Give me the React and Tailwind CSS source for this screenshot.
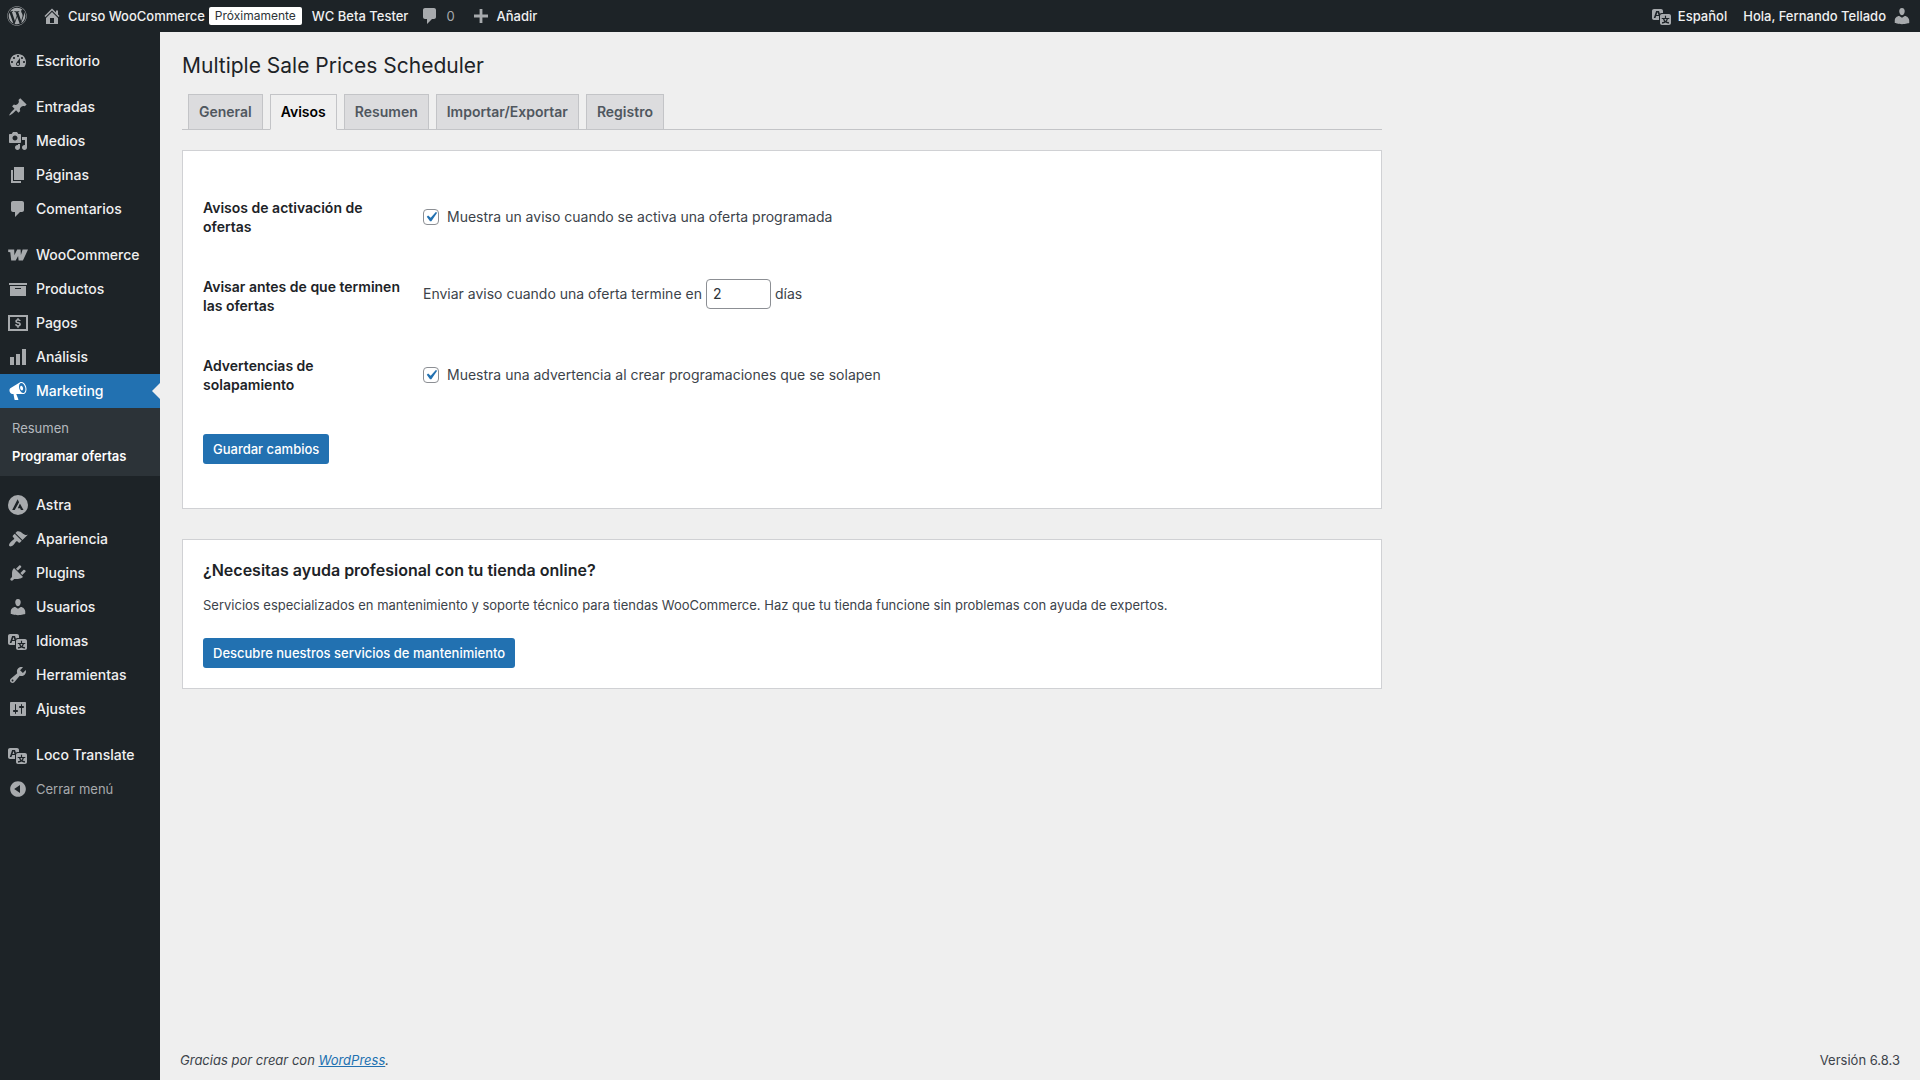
import { FaWordpress } from 'react-icons/fa';

const ICONS = {
  dashboard: 'M3.76 16h12.48c1.1-1.37 1.76-3.11 1.76-5 0-4.42-3.58-8-8-8s-8 3.58-8 8c0 1.89.66 3.63 1.76 5zM10 4c.55 0 1 .45 1 1s-.45 1-1 1-1-.45-1-1 .45-1 1-1zM6 6c.55 0 1 .45 1 1s-.45 1-1 1-1-.45-1-1 .45-1 1-1zm8 0c.55 0 1 .45 1 1s-.45 1-1 1-1-.45-1-1 .45-1 1-1zm-5.37 5.55L12 7v6c0 1.1-.9 2-2 2s-2-.9-2-2c0-.57.24-1.08.63-1.45zM4 10c.55 0 1 .45 1 1s-.45 1-1 1-1-.45-1-1 .45-1 1-1zm12 0c.55 0 1 .45 1 1s-.45 1-1 1-1-.45-1-1 .45-1 1-1zm-5 3c0-.55-.45-1-1-1s-1 .45-1 1 .45 1 1 1 1-.45 1-1z',
  post: 'M10.44 3.02l1.82-1.82 6.36 6.35-1.83 1.82c-1.05-.68-2.48-.57-3.41.36l-.75.75c-.92.93-1.04 2.35-.35 3.41l-1.83 1.82-2.41-2.41-2.8 2.79c-.42.42-3.38 2.71-3.8 2.29s1.86-3.39 2.28-3.81l2.79-2.79L4.1 9.36l1.83-1.82c1.05.69 2.48.57 3.4-.36l.75-.75c.93-.92 1.05-2.35.36-3.41z',
  media: 'M13 11V4c0-.55-.45-1-1-1h-1.67L9 1H5L3.67 3H2c-.55 0-1 .45-1 1v7c0 .55.45 1 1 1h10c.55 0 1-.45 1-1zM7 4.5c1.38 0 2.5 1.12 2.5 2.5S8.38 9.5 7 9.5 4.5 8.38 4.5 7 5.62 4.5 7 4.5zM14 6h5v10.5c0 1.38-1.12 2.5-2.5 2.5S14 17.88 14 16.5s1.12-2.5 2.5-2.5c.17 0 .34.02.5.05V9h-3V6zm-4 8.05V13h2v3.5c0 1.38-1.12 2.5-2.5 2.5S7 17.88 7 16.5 8.12 14 9.5 14c.17 0 .34.02.5.05z',
  page: 'M6 15V2h10v13H6zm-1 1h8v2H3V5h2v11z',
  comments: 'M5 2h9c1.1 0 2 .9 2 2v7c0 1.1-.9 2-2 2h-2l-5 5v-5H5c-1.1 0-2-.9-2-2V4c0-1.1.9-2 2-2z',
  woo: 'M.2 4.6h6l.2 5.6 2.8-5.6h3.4l.3 5.400 1.700-5.400H20l-5.100 11h-4.300l-.5-4.700-2.400 4.700H3.200L2.300 7.300l-2.100-.4z',
  archive: 'M19 4v2H1V4h18zM2 7h16v10H2V7zm11 3V9H7v1h6z',
  payments: 'M0 2h20v16H0V2zm2 2v12h16V4H2zm7.2 1.2h1.6v1c1.1.2 1.9.9 2 1.9h-1.7c-.1-.4-.5-.6-1.1-.6-.7 0-1.1.2-1.1.7 0 .4.3.6 1.3.8 1.8.4 2.7.9 2.7 2.3 0 1.200-.8 2-2.100 2.200v1.300H9.200v-1.300c-1.300-.2-2.100-1-2.200-2.200h1.800c.1.6.5.9 1.300.9.700 0 1.100-.3 1.100-.8s-.3-.7-1.400-.9c-1.700-.4-2.500-1-2.500-2.200 0-1.100.700-1.900 1.900-2.100z',
  chart: 'M18 18V2h-4v16h4zm-6 0V7H8v11h4zm-6 0v-8H2v8h4z',
  megaphone: 'M18.15 5.94c.46 1.62.38 3.22-.02 4.48-.42 1.28-1.26 2.18-2.3 2.48-.16.06-.26.06-.4.06-.06.02-.12.02-.18.02-.06.02-.14.02-.22.02h-6.8l2.22 5.5c.02.14-.06.26-.14.34-.08.1-.24.16-.34.16H6.95c-.1 0-.26-.06-.34-.16-.08-.08-.16-.2-.14-.34l-1-5.5H4.25l-.02-.02c-.5.06-1.08-.18-1.54-.62s-.88-1.08-1.06-1.88c-.24-.8-.2-1.56-.02-2.2.18-.62.58-1.08 1.06-1.3l.02-.02 9-5.4c.1-.06.18-.1.24-.16.06-.04.14-.08.24-.12.16-.08.28-.12.5-.18 1.04-.3 2.24.1 3.22.98s1.84 2.24 2.26 3.86zm-2.58 5.98h-.02c.4-.1.74-.34 1.04-.7.58-.7.86-1.76.86-3.04 0-.64-.1-1.3-.28-1.98-.34-1.36-1.02-2.5-1.78-3.24s-1.68-1.1-2.46-.88c-.82.22-1.4.96-1.7 2-.32 1.04-.28 2.36.06 3.72.38 1.36 1 2.5 1.8 3.24.78.74 1.62 1.1 2.48.88zm-2.54-7.08c.22-.04.42-.02.62.04.38.16.76.48 1.02 1s.42 1.2.42 1.78c0 .3-.04.56-.12.8-.18.48-.44.84-.86.94-.34.1-.8-.06-1.14-.4s-.64-.86-.78-1.5c-.18-.62-.12-1.24.02-1.72s.48-.84.82-.94z',
  astra: 'M10 0a10 10 0 1 0 0 20 10 10 0 0 0 0-20zM9.600 4.200l1.500 3L6.700 15H4.200zM11.900 8.600l3.600 6.400h-2.600l-.8-1.700h-2.300z',
  appearance: 'M14.48 11.06L7.41 3.99l1.5-1.5c.5-.56 2.3-.47 3.51.32 1.21.8 1.43 1.28 2.91 2.1 1.18.64 2.45 1.26 4.45.85zm-.71.71L6.7 4.7 4.93 6.47c-.39.39-.39 1.02 0 1.41l1.06 1.06c.39.39.39 1.03 0 1.42-.6.6-1.43 1.11-2.21 1.69-.35.26-.7.53-1.01.84C1.43 14.23.4 16.08 1.4 17.07c.99 1 2.84-.03 4.18-1.36.31-.31.58-.66.85-1.02.57-.78 1.08-1.61 1.69-2.21.39-.39 1.02-.39 1.41 0l1.06 1.06c.39.39 1.02.39 1.41 0z',
  plugins: 'M13.11 4.36L9.87 7.6 8 5.73l3.24-3.24c.35-.34 1.05-.2 1.56.32.52.51.66 1.21.31 1.55zm-8 1.77l.91-1.12 9.01 9.01-1.19.84c-.71.71-2.63 1.16-3.82 1.16H6.14L4.9 17.26c-.59.59-1.54.59-2.12 0-.59-.58-.59-1.53 0-2.12l1.24-1.24v-3.88c0-1.13.4-3.19 1.09-3.89zm7.26 3.97l3.24-3.24c.34-.35 1.04-.21 1.55.31.52.51.66 1.21.31 1.55l-3.24 3.25z',
  users: 'M10 9.25c-2.27 0-2.73-3.44-2.73-3.44C7 4.02 7.82 2 9.97 2c2.16 0 2.98 2.02 2.71 3.81 0 0-.41 3.44-2.68 3.44zm0 2.57L12.72 10c2.39 0 4.52 2.33 4.52 4.53v2.49s-3.65 1.13-7.24 1.13c-3.65 0-7.24-1.13-7.24-1.13v-2.49c0-2.25 1.94-4.48 4.47-4.48z',
  translation: 'M11 7H9.49c-.63 0-1.25.3-1.59.7L7 5H4.13l-2.39 7h1.69l.74-2H7v4H2c-1.1 0-2-.9-2-2V5c0-1.1.9-2 2-2h7c1.1 0 2 .9 2 2v2zM6.51 9H4.49l1-2.93zM10 8h7c1.1 0 2 .9 2 2v7c0 1.1-.9 2-2 2h-7c-1.1 0-2-.9-2-2v-7c0-1.1.9-2 2-2zm7.25 5v-1.08h-3.17V9.75h-1.16v2.17H9.75V13h1.28c.11.85.56 1.85 1.28 2.62-.87.36-1.89.62-2.31.62-.01.02.22.97.2 1.46.84 0 2.21-.5 3.28-1.15 1.09.65 2.48 1.15 3.34 1.15-.02-.49.2-1.44.2-1.46-.43 0-1.49-.27-2.38-.63.7-.77 1.14-1.77 1.25-2.61h1.36zm-3.81 1.93c-.5-.46-.85-1.13-1.01-1.93h2.09c-.17.8-.51 1.47-1 1.93l-.04.03s-.03-.02-.04-.03z',
  tools: 'M16.68 9.77c-1.34 1.34-3.3 1.67-4.95.99l-5.41 6.52c-.99.99-2.59.99-3.58 0s-.99-2.59 0-3.57l6.52-5.42c-.68-1.65-.35-3.61.99-4.95 1.28-1.28 3.12-1.62 4.72-1.06l-2.89 2.89 2.82 2.82 2.86-2.87c.53 1.58.18 3.39-1.08 4.65zM3.81 16.21c.4.39 1.04.39 1.43 0 .4-.4.4-1.04 0-1.43-.39-.4-1.03-.4-1.43 0-.39.39-.39 1.03 0 1.43z',
  settings: 'M18 16V4c0-.55-.45-1-1-1H3c-.55 0-1 .45-1 1v12c0 .55.45 1 1 1h14c.55 0 1-.45 1-1zM8 11h1c.55 0 1 .45 1 1s-.45 1-1 1H8v1.5c0 .28-.22.5-.5.5s-.5-.22-.5-.5V13H6c-.55 0-1-.45-1-1s.45-1 1-1h1V5.500c0-.28.22-.5.5-.5s.5.22.5.5V11zm5-2h-1c-.55 0-1-.45-1-1s.45-1 1-1h1V5.500c0-.28.22-.5.5-.5s.5.22.5.5V7h1c.55 0 1 .45 1 1s-.45 1-1 1h-1v5.500c0 .28-.22.5-.5.5s-.5-.22-.5-.5V9z',
  collapse: 'M10 2.16c4.33 0 7.84 3.51 7.84 7.84s-3.51 7.84-7.84 7.84S2.16 14.33 2.16 10 5.71 2.16 10 2.16zm2 11.72V6.12L6.18 9.97z',
  home: 'M16 8.5l1.53 1.53-1.06 1.06L10 4.6l-6.47 6.49-1.06-1.06L10 2.5l4 4v-2h2v4zm-6-2.46l6 5.99V18H4v-5.97zM12 17v-5H8v5h4z',
  plus: 'M17 8.600v2.800h-5.600V17H8.600v-5.600H3V8.600h5.600V3h2.800v5.600z',
};

const Icon = ({ name, className = '' }) => (
  <svg viewBox="0 0 20 20" fill="currentColor" fillRule="evenodd" aria-hidden="true" className={`w-5 h-5 shrink-0 ${className}`}>
    <path d={ICONS[name]} />
  </svg>
);

const MENU = [
  [{ label: 'Escritorio', icon: 'dashboard' }],
  [
    { label: 'Entradas', icon: 'post' },
    { label: 'Medios', icon: 'media' },
    { label: 'Páginas', icon: 'page' },
    { label: 'Comentarios', icon: 'comments' },
  ],
  [
    { label: 'WooCommerce', icon: 'woo' },
    { label: 'Productos', icon: 'archive' },
    { label: 'Pagos', icon: 'payments' },
    { label: 'Análisis', icon: 'chart' },
    { label: 'Marketing', icon: 'megaphone', submenu: ['Resumen', 'Programar ofertas'] },
  ],
  [
    { label: 'Astra', icon: 'astra' },
    { label: 'Apariencia', icon: 'appearance' },
    { label: 'Plugins', icon: 'plugins' },
    { label: 'Usuarios', icon: 'users' },
    { label: 'Idiomas', icon: 'translation' },
    { label: 'Herramientas', icon: 'tools' },
    { label: 'Ajustes', icon: 'settings' },
  ],
  [{ label: 'Loco Translate', icon: 'translation' }],
];

const TABS = ['General', 'Avisos', 'Resumen', 'Importar/Exportar', 'Registro'];

const AdminBar = () => (
  <header className="flex items-center h-8 pl-[7px] pr-2 bg-[#1d2327] text-[13px] font-medium text-[#f0f0f1]">
    <a href="#" aria-label="WordPress" className="mr-[15px] text-[#a7aaad]"><FaWordpress size={20} /></a>
    <a href="#" className="flex items-center gap-1.5">
      <Icon name="home" className="text-[#a7aaad]" />
      Curso WooCommerce
    </a>
    <a href="#" className="ml-1 px-1.5 h-[18px] leading-[18px] rounded-xs bg-white text-xs font-normal text-[#2c3338]">Próximamente</a>
    <a href="#" className="ml-2.5">WC Beta Tester</a>
    <a href="#" className="flex items-center gap-1.5 ml-3 font-normal text-[#a7aaad]">
      <Icon name="comments" />
      0
    </a>
    <a href="#" className="flex items-center gap-1.5 ml-4">
      <Icon name="plus" className="text-[#a7aaad]" />
      Añadir
    </a>
    <a href="#" className="flex items-center gap-1.5 ml-auto">
      <Icon name="translation" className="text-[#a7aaad]" />
      Español
    </a>
    <a href="#" className="flex items-center gap-1.5 ml-4">
      Hola, Fernando Tellado
      <Icon name="users" className="text-[#a7aaad]" />
    </a>
  </header>
);

const MenuItem = ({ item }) => {
  const active = Boolean(item.submenu);
  return (
    <li>
      <a
        href="#"
        className={`relative flex items-center gap-2 h-[34px] pl-2 ${active ? 'bg-[#2271b1] text-white' : 'text-[#f0f0f1]'}`}
      >
        <Icon name={item.icon} className={active ? 'text-white' : 'text-[#a7aaad]'} />
        {item.label}
        {active && <span className="absolute right-0 top-[9px] border-y-8 border-r-8 border-y-transparent border-r-[#efefef]" />}
      </a>
      {active && (
        <ul className="py-1.5 bg-[#2c3338] text-[13px]">
          {item.submenu.map((label, i) => (
            <li key={label}>
              <a href="#" className={`block h-7 leading-7 px-3 ${i === 1 ? 'font-semibold text-white' : 'font-normal text-[#b4b9be]'}`}>{label}</a>
            </li>
          ))}
        </ul>
      )}
    </li>
  );
};

const Sidebar = () => (
  <nav className="w-40 shrink-0 pt-3 bg-[#1d2327] text-sm font-medium">
    {MENU.map((group, i) => (
      <ul key={i} className={i < MENU.length - 1 ? 'mb-3' : ''}>
        {group.map((item) => <MenuItem key={item.label} item={item} />)}
      </ul>
    ))}
    <button type="button" className="flex items-center gap-2 h-[34px] pl-2 text-[13px] font-normal text-[#a7aaad]">
      <Icon name="collapse" />
      Cerrar menú
    </button>
  </nav>
);

const Checkbox = ({ id, children }) => (
  <label htmlFor={id} className="flex items-center gap-2">
    <span className="relative w-4 h-4">
      <input id={id} type="checkbox" defaultChecked className="block appearance-none w-4 h-4 rounded border border-[#8c8f94] bg-white" />
      <svg viewBox="0 0 20 20" className="absolute -inset-0.5 w-5 h-5 pointer-events-none" aria-hidden="true">
        <path d="M14.83 4.89l1.34.94-5.81 8.38H9.02L5.78 9.67l1.34-1.25 2.57 2.4z" fill="#2271b1" />
      </svg>
    </span>
    {children}
  </label>
);

const Row = ({ title, htmlFor, children }) => (
  <div className="flex items-center h-[79px]">
    <label htmlFor={htmlFor} className="w-[220px] shrink-0 pr-5 leading-[19px] font-semibold text-[#1d2327]">{title}</label>
    {children}
  </div>
);

const Panel = ({ children, className }) => (
  <section className={`px-5 border border-[#d0d1d4] bg-white ${className}`}>{children}</section>
);

const BUTTON = 'inline-block h-[30px] leading-[30px] px-2.5 rounded-[3px] bg-[#2271b1] text-[13px] font-medium text-white';

export default function App() {
  return (
    <div className="flex flex-col min-h-screen bg-[#efefef] font-[Inter,sans-serif] text-sm text-[#3c434a]">
      <AdminBar />
      <div className="flex flex-1">
        <Sidebar />
        <div className="flex flex-col flex-1 px-5">
          <main className="max-w-[1202px] pl-0.5">
            <h1 className="pt-[18px] text-[21px] leading-[32px] text-[#1d2327]">Multiple Sale Prices Scheduler</h1>
            <nav className="flex gap-[7px] mt-3 pl-1.5 border-b border-[#c3c4c7] font-semibold">
              {TABS.map((tab) => (
                <a
                  key={tab}
                  href="#"
                  className={`px-2.5 h-9 leading-[34px] -mb-px border ${tab === 'Avisos'
                    ? 'border-[#c3c4c7] border-b-[#efefef] bg-[#efefef] text-black'
                    : 'border-[#c3c4c7] bg-[#dcdcde] text-[#50575e]'}`}
                >
                  {tab}
                </a>
              ))}
            </nav>

            <Panel className="mt-5 pt-[26px] pb-11">
              <form onSubmit={(e) => e.preventDefault()}>
                <Row title="Avisos de activación de ofertas" htmlFor="activation">
                  <Checkbox id="activation">Muestra un aviso cuando se activa una oferta programada</Checkbox>
                </Row>
                <Row title="Avisar antes de que terminen las ofertas" htmlFor="days">
                  <div className="flex items-center gap-1 pb-1">
                    Enviar aviso cuando una oferta termine en
                    <input id="days" type="text" inputMode="numeric" defaultValue="2" className="w-[65px] h-[30px] px-1.5 rounded border border-[#8c8f94] bg-white text-[#2c3338]" />
                    días
                  </div>
                </Row>
                <Row title="Advertencias de solapamiento" htmlFor="overlap">
                  <Checkbox id="overlap">Muestra una advertencia al crear programaciones que se solapen</Checkbox>
                </Row>
                <button type="submit" className={`${BUTTON} mt-5`}>Guardar cambios</button>
              </form>
            </Panel>

            <Panel className="mt-[30px] py-5">
              <h2 className="text-base leading-[20px] font-semibold text-[#1d2327]">¿Necesitas ayuda profesional con tu tienda online?</h2>
              <p className="mt-[15px] mb-[23px] text-[13px] leading-[20px]">
                Servicios especializados en mantenimiento y soporte técnico para tiendas WooCommerce. Haz que tu tienda funcione sin problemas con ayuda de expertos.
              </p>
              <a href="#" className={BUTTON}>Descubre nuestros servicios de mantenimiento</a>
            </Panel>
          </main>

          <footer className="flex justify-between mt-auto pb-2.5 text-[13px] leading-[20px]">
            <p className="italic">
              Gracias por crear con <a href="#" className="text-[#2271b1] underline">WordPress</a>.
            </p>
            <p>Versión 6.8.3</p>
          </footer>
        </div>
      </div>
    </div>
  );
}
